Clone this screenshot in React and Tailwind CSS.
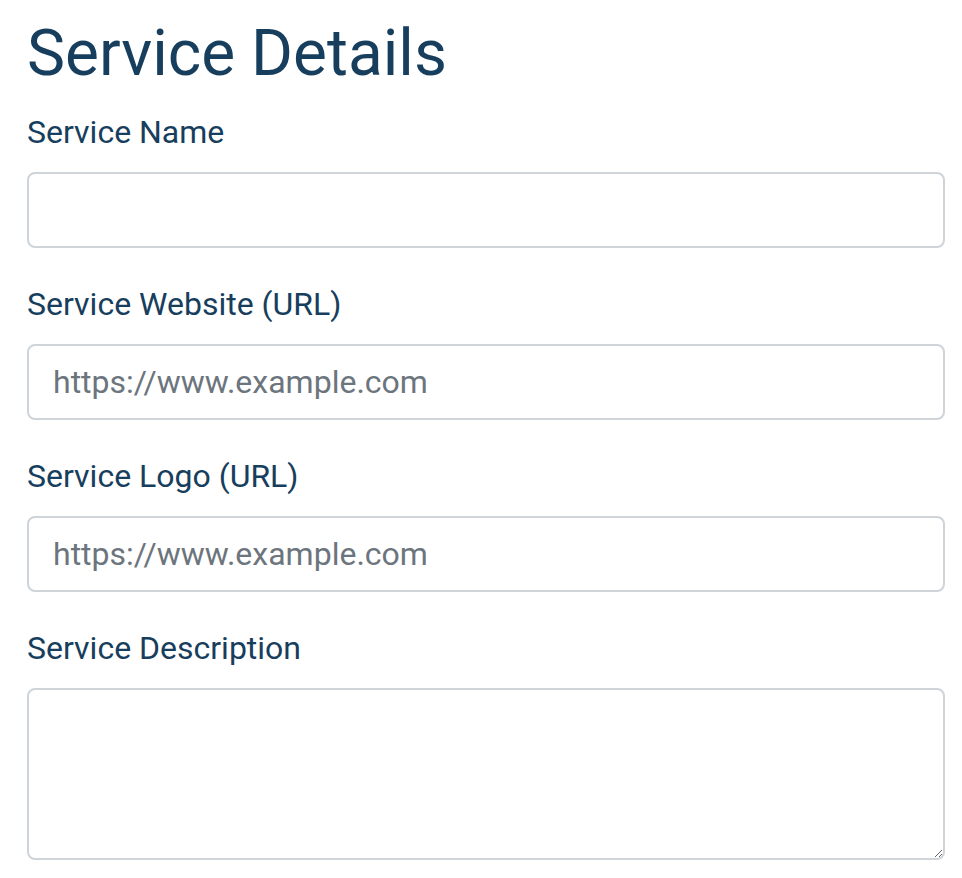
export default function App() {
  const labelCls = "block text-[32px] leading-[48px] mb-[16px] text-[#173e5d]";
  const inputCls =
    "block w-full h-[76px] px-[24px] border-2 border-[#ced4da] rounded-[8px] bg-white text-[32px] text-[#495057] placeholder:text-[#6c757d] outline-none";

  return (
    <div className="min-h-screen bg-white pl-[27px] pr-[17px] pt-[15px] font-['Roboto',sans-serif]">
      {/* Heading */}
      <h2 className="text-[64px] leading-[77px] font-normal text-[#173e5d] mb-[16px]">Service Details</h2>

      <form>
        <div className="mb-[32px]">
          <label className={labelCls}>Service Name</label>
          <input type="text" className={inputCls} />
        </div>

        <div className="mb-[32px]">
          <label className={labelCls}>Service Website (URL)</label>
          <input type="text" className={inputCls} placeholder="https://www.example.com" />
        </div>

        <div className="mb-[32px]">
          <label className={labelCls}>Service Logo (URL)</label>
          <input type="text" className={inputCls} placeholder="https://www.example.com" />
        </div>

        <div className="mb-[32px]">
          <label className={labelCls}>Service Description</label>
          <textarea
            rows={3}
            className="block w-full h-[172px] px-[24px] py-[12px] border-2 border-[#ced4da] rounded-[8px] bg-white text-[32px] text-[#495057] outline-none"
          />
        </div>
      </form>
    </div>
  );
}
